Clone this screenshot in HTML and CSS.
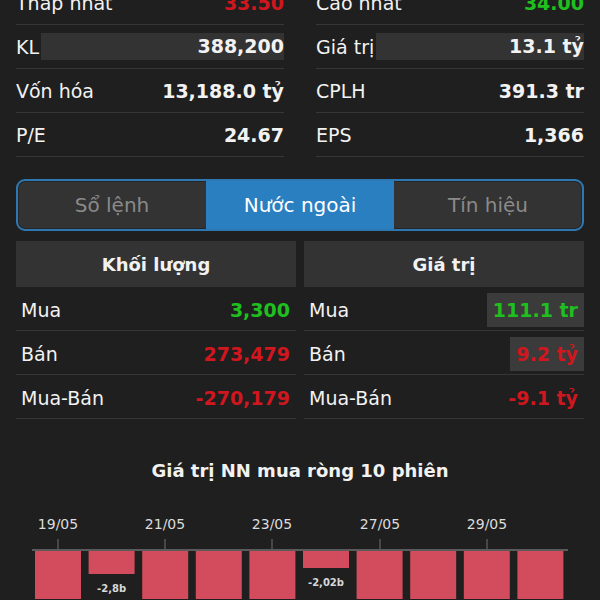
FILE: index.html
```html
<!DOCTYPE html>
<html lang="vi">
<head>
  <meta charset="UTF-8">
  <title>Nước ngoài</title>
  <link rel="stylesheet" href="styles.css">
</head>
<body>

<div class="page">
  <div class="stats">
    <div class="stat"><span class="label">Thấp nhất</span><span class="value down">33.50</span></div>
    <div class="stat"><span class="label">Cao nhất</span><span class="value up">34.00</span></div>
    <div class="stat"><span class="label">KL</span><span class="value flash">388,200</span></div>
    <div class="stat"><span class="label">Giá trị</span><span class="value flash">13.1 tỷ</span></div>
    <div class="stat"><span class="label">Vốn hóa</span><span class="value">13,188.0 tỷ</span></div>
    <div class="stat"><span class="label">CPLH</span><span class="value">391.3 tr</span></div>
    <div class="stat"><span class="label">P/E</span><span class="value">24.67</span></div>
    <div class="stat"><span class="label">EPS</span><span class="value">1,366</span></div>
  </div>

  <div class="tabs">
    <div class="tab">Sổ lệnh</div>
    <div class="tab active">Nước ngoài</div>
    <div class="tab">Tín hiệu</div>
  </div>

  <div class="foreign">
    <div class="col">
      <div class="col-head">Khối lượng</div>
      <div class="frow"><span class="label">Mua</span><span class="value up">3,300</span></div>
      <div class="frow"><span class="label">Bán</span><span class="value down">273,479</span></div>
      <div class="frow"><span class="label">Mua-Bán</span><span class="value down">-270,179</span></div>
    </div>
    <div class="col">
      <div class="col-head">Giá trị</div>
      <div class="frow"><span class="label">Mua</span><span class="value up box">111.1 tr</span></div>
      <div class="frow"><span class="label">Bán</span><span class="value down box">9.2 tỷ</span></div>
      <div class="frow"><span class="label">Mua-Bán</span><span class="value down">-9.1 tỷ</span></div>
    </div>
  </div>

  <div class="chart-title">Giá trị NN mua ròng 10 phiên</div>
</div>

<svg class="chart" width="600" height="100" viewBox="0 0 600 100">
  <g class="ticks">
    <text x="58" y="30">19/05</text>
    <text x="165" y="30">21/05</text>
    <text x="272" y="30">23/05</text>
    <text x="380" y="30">27/05</text>
    <text x="487" y="30">29/05</text>
    <line x1="58" y1="40" x2="58" y2="51"/>
    <line x1="165" y1="40" x2="165" y2="51"/>
    <line x1="272" y1="40" x2="272" y2="51"/>
    <line x1="380" y1="40" x2="380" y2="51"/>
    <line x1="487" y1="40" x2="487" y2="51"/>
  </g>
  <line class="axis" x1="32" y1="51" x2="568" y2="51"/>
  <g class="bars">
    <rect x="35" y="52" width="46" height="60"/>
    <rect x="88.6" y="52" width="46" height="23"/>
    <rect x="142.2" y="52" width="46" height="60"/>
    <rect x="195.8" y="52" width="46" height="60"/>
    <rect x="249.4" y="52" width="46" height="60"/>
    <rect x="303" y="52" width="46" height="17"/>
    <rect x="356.6" y="52" width="46" height="60"/>
    <rect x="410.2" y="52" width="46" height="60"/>
    <rect x="463.8" y="52" width="46" height="60"/>
    <rect x="517.4" y="52" width="46" height="60"/>
  </g>
  <g class="bar-labels">
    <text x="111.6" y="93">-2,8b</text>
    <text x="326" y="87">-2,02b</text>
  </g>
</svg>

</body>
</html>
```

FILE: styles.css
```css
* {margin:0;padding:0;box-sizing:border-box;}
body {
  background: #1f1f1f;
  color: #f2f2f2;
  font-family: "DejaVu Sans", sans-serif;
  overflow: hidden;
}
.page {
  padding: 0 16px;
}

.up { color: #1fbf1f; }
.down { color: #d0161e; }

.stats {
  display: grid;
  grid-template-columns: 1fr 1fr;
  column-gap: 32px;
  margin-top: -19px;
}
.stat {
  display: flex;
  align-items: center;
  height: 44px;
  border-bottom: 1px solid #363636;
  font-size: 19px;
}
.stat .value {
  margin-left: auto;
  font-weight: bold;
}
.stat .value.flash {
  flex: 1;
  margin-left: 2px;
  height: 27px;
  line-height: 27px;
  text-align: right;
  background: #333;
}

.tabs {
  display: flex;
  margin-top: 22px;
  height: 52px;
  border: 2px solid #2d78b2;
  border-radius: 9px;
  background: #333;
  box-shadow: inset 0 0 0 1px #262626;
  overflow: hidden;
}
.tab {
  flex: 1;
  display: flex;
  align-items: center;
  justify-content: center;
  font-size: 20px;
  color: #8a8a8a;
}
.tab.active {
  background: #2a7fc1;
  color: #fff;
}

.foreign {
  display: grid;
  grid-template-columns: 1fr 1fr;
  column-gap: 8px;
  margin-top: 10px;
}
.col-head {
  height: 46px;
  display: flex;
  align-items: center;
  justify-content: center;
  background: #333;
  font-size: 18px;
  font-weight: bold;
}
.frow {
  display: flex;
  align-items: center;
  height: 44px;
  padding: 3px 0 0 5px;
  border-bottom: 1px solid #363636;
  font-size: 19px;
}
.frow .value {
  margin-left: auto;
  padding: 0 6px;
  font-weight: bold;
}
.frow .value.box {
  height: 34px;
  line-height: 34px;
  background: #3b3b3b;
}

.chart-title {
  margin-top: 41px;
  text-align: center;
  font-size: 18px;
  font-weight: bold;
  line-height: 22px;
}

.chart {
  display: block;
  margin-top: 17px;
}
.chart text {
  font-family: "DejaVu Sans", sans-serif;
  text-anchor: middle;
}
.ticks text {
  font-size: 14px;
  fill: #dcdcdc;
}
.ticks line {
  stroke: #707070;
  stroke-width: 1;
}
.axis {
  stroke: #5a5a5a;
  stroke-width: 2;
}
.bars rect {
  fill: #d24c5d;
}
.bar-labels text {
  font-size: 10px;
  font-weight: bold;
  fill: #d8d8d8;
}
```
